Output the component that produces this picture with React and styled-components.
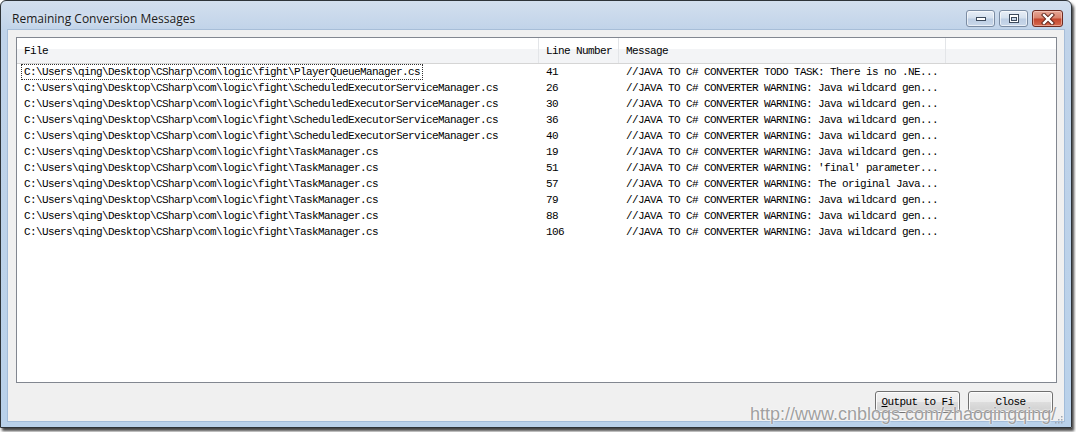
import React from 'react';
import styled, { createGlobalStyle } from 'styled-components';

const rows = [
    ['C:\\Users\\qing\\Desktop\\CSharp\\com\\logic\\fight\\PlayerQueueManager.cs', '41', '//JAVA TO C# CONVERTER TODO TASK: There is no .NE...'],
    ['C:\\Users\\qing\\Desktop\\CSharp\\com\\logic\\fight\\ScheduledExecutorServiceManager.cs', '26', '//JAVA TO C# CONVERTER WARNING: Java wildcard gen...'],
    ['C:\\Users\\qing\\Desktop\\CSharp\\com\\logic\\fight\\ScheduledExecutorServiceManager.cs', '30', '//JAVA TO C# CONVERTER WARNING: Java wildcard gen...'],
    ['C:\\Users\\qing\\Desktop\\CSharp\\com\\logic\\fight\\ScheduledExecutorServiceManager.cs', '36', '//JAVA TO C# CONVERTER WARNING: Java wildcard gen...'],
    ['C:\\Users\\qing\\Desktop\\CSharp\\com\\logic\\fight\\ScheduledExecutorServiceManager.cs', '40', '//JAVA TO C# CONVERTER WARNING: Java wildcard gen...'],
    ['C:\\Users\\qing\\Desktop\\CSharp\\com\\logic\\fight\\TaskManager.cs', '19', '//JAVA TO C# CONVERTER WARNING: Java wildcard gen...'],
    ['C:\\Users\\qing\\Desktop\\CSharp\\com\\logic\\fight\\TaskManager.cs', '51', "//JAVA TO C# CONVERTER WARNING: 'final' parameter..."],
    ['C:\\Users\\qing\\Desktop\\CSharp\\com\\logic\\fight\\TaskManager.cs', '57', '//JAVA TO C# CONVERTER WARNING: The original Java...'],
    ['C:\\Users\\qing\\Desktop\\CSharp\\com\\logic\\fight\\TaskManager.cs', '79', '//JAVA TO C# CONVERTER WARNING: Java wildcard gen...'],
    ['C:\\Users\\qing\\Desktop\\CSharp\\com\\logic\\fight\\TaskManager.cs', '88', '//JAVA TO C# CONVERTER WARNING: Java wildcard gen...'],
    ['C:\\Users\\qing\\Desktop\\CSharp\\com\\logic\\fight\\TaskManager.cs', '106', '//JAVA TO C# CONVERTER WARNING: Java wildcard gen...'],
];

const App = () => {
    return (
        <>
            <GlobalStyle />
            <Page>
                <Window>
                    <TitleBar>
                        <Title>Remaining Conversion Messages</Title>
                        <CaptionButtons>
                            <CaptionButton>
                                <svg width="12" height="6" viewBox="0 0 12 6">
                                    <rect x="1.5" y="1.5" width="9" height="3" fill="#fff" stroke="#3d4a5c" strokeWidth="1" />
                                </svg>
                            </CaptionButton>
                            <CaptionButton>
                                <svg width="12" height="10" viewBox="0 0 12 10">
                                    <rect x="1.5" y="0.5" width="9" height="8" fill="#fff" stroke="#3d4a5c" strokeWidth="1" />
                                    <rect x="3.5" y="3.5" width="5" height="3" fill="#c7d5e8" stroke="#3d4a5c" strokeWidth="1" />
                                </svg>
                            </CaptionButton>
                            <CloseCaption>
                                <svg width="14" height="12" viewBox="0 0 14 12">
                                    <path d="M3 2 L11 10 M11 2 L3 10" stroke="#5a2118" strokeWidth="4.2" strokeLinecap="square" />
                                    <path d="M3 2 L11 10 M11 2 L3 10" stroke="#fff" strokeWidth="2.4" strokeLinecap="square" />
                                </svg>
                            </CloseCaption>
                        </CaptionButtons>
                    </TitleBar>
                    <Client>
                        <ListView>
                            <HeaderRow>
                                <HeaderCell>File</HeaderCell>
                                <HeaderCell>Line Number</HeaderCell>
                                <HeaderCell>Message</HeaderCell>
                                <HeaderCell $last />
                            </HeaderRow>
                            {rows.map((r, i) => (
                                <Row key={i}>
                                    <Cell><CellText $focused={i === 0}>{r[0]}</CellText></Cell>
                                    <Cell><CellText>{r[1]}</CellText></Cell>
                                    <Cell><CellText>{r[2]}</CellText></Cell>
                                    <Cell />
                                </Row>
                            ))}
                        </ListView>
                        <Footer>
                            <Button><u>O</u>utput to Fi</Button>
                            <Button>Close</Button>
                        </Footer>
                        <Grip>
                            <svg width="10" height="10" viewBox="0 0 10 10">
                                {[[8, 2], [5, 5], [8, 5], [2, 8], [5, 8], [8, 8]].map(([x, y], i) => (
                                    <rect key={i} x={x} y={y} width="1.5" height="1.5" fill="#a0a8b4" />
                                ))}
                            </svg>
                        </Grip>
                    </Client>
                </Window>
                <Watermark>http://www.cnblogs.com/zhaoqingqing/</Watermark>
            </Page>
        </>
    );
};

export default App;

const GlobalStyle = createGlobalStyle`
    html, body {
        margin: 0;
        padding: 0;
        background: #ffffff;
    }
`;

const Page = styled.div`
    position: relative;
    width: 1076px;
    height: 432px;
    overflow: hidden;
    background: #ffffff;
`;

const Window = styled.div`
    width: 1072px;
    height: 428px;
    box-sizing: border-box;
    display: flex;
    flex-direction: column;
    border: 1px solid #2e3338;
    border-radius: 6px 6px 0 0;
    background: linear-gradient(to bottom, #d3dfee 0px, #c0d3e9 30px, #b9d1ea 100%);
    padding: 0 7px 6px 7px;
    box-shadow: 2px 3px 3px rgba(0, 0, 0, 0.75);
`;

const TitleBar = styled.div`
    height: 29px;
    display: flex;
    align-items: flex-start;
    justify-content: space-between;
`;

const Title = styled.div`
    font-family: "Open Sans", "Noto Sans", sans-serif;
    font-size: 12px;
    color: #1b1b1b;
    margin-left: 4px;
    margin-top: 10px;
    line-height: 16px;
    text-shadow: 0 0 6px rgba(255, 255, 255, 0.9);
`;

const CaptionButtons = styled.div`
    display: flex;
    gap: 4px;
    margin-top: 9px;
    margin-right: 1px;
`;

const CaptionButton = styled.div`
    width: 29px;
    height: 17px;
    box-sizing: border-box;
    border: 1px solid #7b8ca3;
    border-radius: 3px;
    background: linear-gradient(to bottom, #e8eef7 0%, #d4e0ee 48%, #bccde3 52%, #c9d8ea 100%);
    display: flex;
    align-items: center;
    justify-content: center;
    box-shadow: inset 0 0 0 1px rgba(255, 255, 255, 0.6);
`;

const CloseCaption = styled(CaptionButton)`
    width: 31px;
    border-color: #6e2a20;
    background: linear-gradient(to bottom, #e6a797 0%, #d9826c 48%, #c3452d 52%, #d66a4e 100%);
    box-shadow: inset 0 0 0 1px rgba(255, 220, 210, 0.5);
`;

const Client = styled.div`
    position: relative;
    flex: 1;
    display: flex;
    flex-direction: column;
    background: #f0f0f0;
    padding: 7px 7px 8px 8px;
    outline: 1px solid rgba(120, 150, 185, 0.35);
`;

const ListView = styled.div`
    flex: 1;
    background: #ffffff;
    border: 1px solid #828790;
    overflow: hidden;
`;

const cols = '522px 80px 327px 1fr';

const HeaderRow = styled.div`
    display: grid;
    grid-template-columns: ${cols};
    height: 25px;
    border-bottom: 1px solid #d5d5d5;
    background: linear-gradient(to bottom, #ffffff 0%, #ffffff 45%, #f3f4f6 46%, #f3f4f6 100%);
`;

const HeaderCell = styled.div`
    display: flex;
    align-items: center;
    padding-left: 7px;
    border-right: ${p => (p.$last ? 'none' : '1px solid #e3e5e8')};
    font-family: "Liberation Mono", "DejaVu Sans Mono", monospace;
    font-size: 11px;
    letter-spacing: -0.6px;
    color: #000;
    white-space: nowrap;
`;

const Row = styled.div`
    display: grid;
    grid-template-columns: ${cols};
    height: 16px;
`;

const Cell = styled.div`
    display: flex;
    align-items: center;
    padding-left: 5px;
    white-space: nowrap;
    overflow: hidden;
`;

const CellText = styled.span`
    display: inline-block;
    padding: 0 2px;
    line-height: 14px;
    font-family: "Liberation Mono", "DejaVu Sans Mono", monospace;
    font-size: 11px;
    letter-spacing: -0.6px;
    color: #000;
    outline: ${p => (p.$focused ? '1px dotted #333' : 'none')};
`;

const Footer = styled.div`
    display: flex;
    justify-content: flex-end;
    gap: 8px;
    padding-top: 8px;
    padding-right: 4px;
`;

const Button = styled.button`
    width: 85px;
    height: 22px;
    box-sizing: border-box;
    border: 1px solid #707070;
    border-radius: 3px;
    background: linear-gradient(to bottom, #f2f2f2 0%, #ebebeb 48%, #dddddd 52%, #cfcfcf 100%);
    box-shadow: inset 0 0 0 1px #fcfcfc;
    font-family: "Liberation Mono", "DejaVu Sans Mono", monospace;
    font-size: 11px;
    letter-spacing: -0.6px;
    color: #000;
    padding: 0;
    u {
        text-underline-offset: 1px;
    }
`;

const Grip = styled.div`
    position: absolute;
    right: 1px;
    bottom: 1px;
    width: 10px;
    height: 10px;
`;

const Watermark = styled.div`
    position: absolute;
    left: 750px;
    top: 403px;
    font-family: "Liberation Sans", Arial, sans-serif;
    font-size: 18px;
    line-height: 22px;
    color: #a0a0a0;
    text-shadow: 0 0 2px #ffffff, 0 0 1px #ffffff;
    white-space: nowrap;
`;
